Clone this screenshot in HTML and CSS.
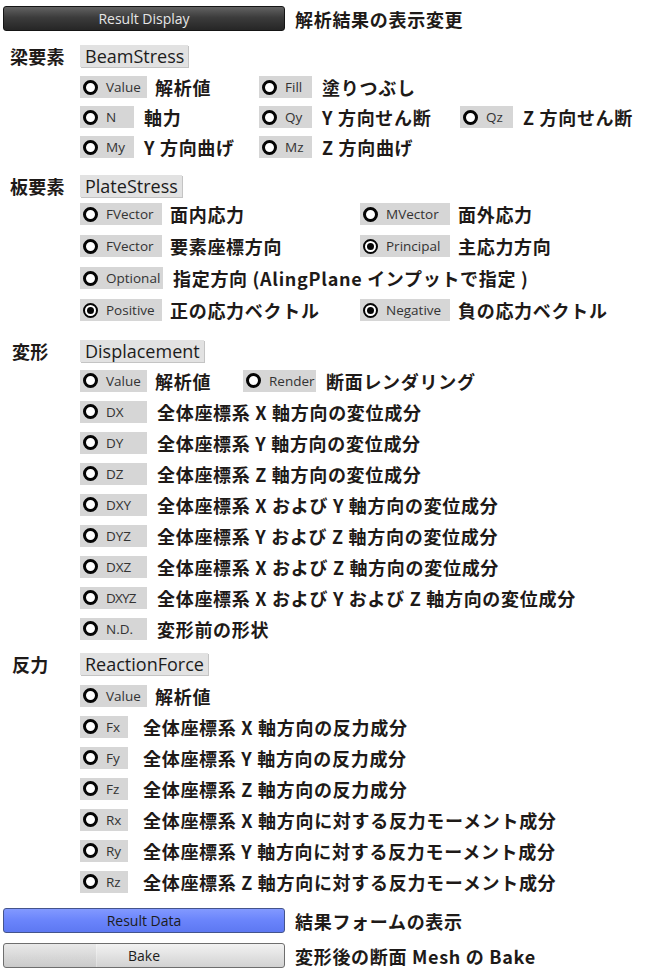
FILE: index.html
```html
<!DOCTYPE html>
<html lang="ja">
<head>
<meta charset="utf-8">
<title>Result Display</title>
<link rel="stylesheet" href="styles.css">
</head>
<body>
<div class="page">
  <div class="btnrow">
    <div class="btn btn-dark">Result Display</div>
    <span class="jp btn-label">解析結果の表示変更</span>
  </div>

  <div class="head head-beam"><span class="head-jp">梁要素</span><span class="tag">BeamStress</span></div>
  <div class="rows rows-beam">
    <div class="row">
      <div class="cell c179"><span class="opt w67"><i class="radio"></i>Value</span><span class="jp lab8">解析値</span></div>
      <div class="cell"><span class="opt w53"><i class="radio"></i>Fill</span><span class="jp">塗りつぶし</span></div>
    </div>
    <div class="row">
      <div class="cell c179"><span class="opt w54"><i class="radio"></i>N</span><span class="jp">軸力</span></div>
      <div class="cell c201"><span class="opt w53"><i class="radio"></i>Qy</span><span class="jp">Y 方向せん断</span></div>
      <div class="cell"><span class="opt w53"><i class="radio"></i>Qz</span><span class="jp">Z 方向せん断</span></div>
    </div>
    <div class="row">
      <div class="cell c179"><span class="opt w54"><i class="radio"></i>My</span><span class="jp">Y 方向曲げ</span></div>
      <div class="cell"><span class="opt w53"><i class="radio"></i>Mz</span><span class="jp">Z 方向曲げ</span></div>
    </div>
  </div>

  <div class="head head-plate"><span class="head-jp">板要素</span><span class="tag">PlateStress</span></div>
  <div class="rows rows-plate">
    <div class="row">
      <div class="cell c280"><span class="opt w82"><i class="radio"></i>FVector</span><span class="jp lab8">面内応力</span></div>
      <div class="cell"><span class="opt w90"><i class="radio"></i>MVector</span><span class="jp lab8">面外応力</span></div>
    </div>
    <div class="row">
      <div class="cell c280"><span class="opt w82"><i class="radio"></i>FVector</span><span class="jp lab8">要素座標方向</span></div>
      <div class="cell"><span class="opt w90"><i class="radio on"></i>Principal</span><span class="jp lab8">主応力方向</span></div>
    </div>
    <div class="row">
      <div class="cell"><span class="opt w83"><i class="radio"></i>Optional</span><span class="jp">指定方向 (AlingPlane インプットで指定 )</span></div>
    </div>
    <div class="row">
      <div class="cell c280"><span class="opt w82"><i class="radio on"></i>Positive</span><span class="jp lab8">正の応力ベクトル</span></div>
      <div class="cell"><span class="opt w90"><i class="radio on"></i>Negative</span><span class="jp lab8">負の応力ベクトル</span></div>
    </div>
  </div>

  <div class="head head-disp"><span class="head-jp indent">変形</span><span class="tag">Displacement</span></div>
  <div class="rows rows-disp">
    <div class="row">
      <div class="cell c163"><span class="opt w67"><i class="radio"></i>Value</span><span class="jp lab8">解析値</span></div>
      <div class="cell"><span class="opt w73"><i class="radio"></i>Render</span><span class="jp">断面レンダリング</span></div>
    </div>
    <div class="row"><span class="opt w67"><i class="radio"></i>DX</span><span class="jp lab10">全体座標系 X 軸方向の変位成分</span></div>
    <div class="row"><span class="opt w67"><i class="radio"></i>DY</span><span class="jp lab10">全体座標系 Y 軸方向の変位成分</span></div>
    <div class="row"><span class="opt w67"><i class="radio"></i>DZ</span><span class="jp lab10">全体座標系 Z 軸方向の変位成分</span></div>
    <div class="row"><span class="opt w67"><i class="radio"></i>DXY</span><span class="jp lab10">全体座標系 X および Y 軸方向の変位成分</span></div>
    <div class="row"><span class="opt w67"><i class="radio"></i>DYZ</span><span class="jp lab10">全体座標系 Y および Z 軸方向の変位成分</span></div>
    <div class="row"><span class="opt w67"><i class="radio"></i>DXZ</span><span class="jp lab10">全体座標系 X および Z 軸方向の変位成分</span></div>
    <div class="row"><span class="opt w67 tight"><i class="radio"></i>DXYZ</span><span class="jp lab10">全体座標系 X および Y および Z 軸方向の変位成分</span></div>
    <div class="row"><span class="opt w67"><i class="radio"></i>N.D.</span><span class="jp lab10">変形前の形状</span></div>
  </div>

  <div class="head head-react"><span class="head-jp indent">反力</span><span class="tag">ReactionForce</span></div>
  <div class="rows rows-react">
    <div class="row"><span class="opt w67"><i class="radio"></i>Value</span><span class="jp lab8">解析値</span></div>
    <div class="row"><span class="opt w48"><i class="radio"></i>Fx</span><span class="jp lab15">全体座標系 X 軸方向の反力成分</span></div>
    <div class="row"><span class="opt w48"><i class="radio"></i>Fy</span><span class="jp lab15">全体座標系 Y 軸方向の反力成分</span></div>
    <div class="row"><span class="opt w48"><i class="radio"></i>Fz</span><span class="jp lab15">全体座標系 Z 軸方向の反力成分</span></div>
    <div class="row"><span class="opt w48"><i class="radio"></i>Rx</span><span class="jp lab15">全体座標系 X 軸方向に対する反力モーメント成分</span></div>
    <div class="row"><span class="opt w48"><i class="radio"></i>Ry</span><span class="jp lab15">全体座標系 Y 軸方向に対する反力モーメント成分</span></div>
    <div class="row"><span class="opt w48"><i class="radio"></i>Rz</span><span class="jp lab15">全体座標系 Z 軸方向に対する反力モーメント成分</span></div>
  </div>

  <div class="btnrow btnrow-data">
    <div class="btn btn-blue">Result Data</div>
    <span class="jp btn-label">結果フォームの表示</span>
  </div>
  <div class="btnrow btnrow-bake">
    <div class="btn btn-light">Bake</div>
    <span class="jp btn-label">変形後の断面 Mesh の Bake</span>
  </div>
</div>
</body>
</html>
```

FILE: styles.css
```css
html, body {
  margin: 0;
  padding: 0;
  background: #ffffff;
}

body {
  font-family: "Noto Sans CJK JP", "Noto Sans", sans-serif;
  color: #1e1e1e;
}

.page {
  display: flex;
  flex-direction: column;
  padding-top: 6px;
}

/* ---------- buttons ---------- */
.btnrow {
  display: flex;
  align-items: center;
  height: 25px;
  padding-left: 3px;
}

.btnrow-data { margin-top: 11px; }
.btnrow-bake { margin-top: 10px; }

.btn {
  width: 282px;
  height: 25px;
  box-sizing: border-box;
  border-radius: 3px;
  display: flex;
  align-items: center;
  justify-content: center;
  font-family: "Open Sans", "Noto Sans", sans-serif;
  font-size: 14px;
}

.btn-dark {
  background: linear-gradient(#626262 0%, #3c3c3c 45%, #262626 100%);
  border: 1px solid #151515;
  color: #e6e6e6;
}

.btn-blue {
  background: linear-gradient(#8299ff 0%, #6a84fb 50%, #5d78f2 100%);
  border: 1px solid #44548c;
  color: #1c1c1c;
}

.btn-light {
  background:
    linear-gradient(90deg, rgba(0,0,0,0.04) 0, rgba(0,0,0,0.04) 92px, rgba(255,255,255,0.5) 92px, rgba(255,255,255,0) 93px),
    linear-gradient(#f2f2f2 0%, #e2e2e2 50%, #d2d2d2 100%);
  border: 1px solid #6e6e6e;
  color: #1c1c1c;
}

.btn-label {
  margin-left: 20px;
}

/* ---------- Japanese labels ---------- */
.jp {
  font-family: "Noto Sans CJK JP", sans-serif;
  font-weight: 700;
  font-size: 18px;
  letter-spacing: 0.7px;
  line-height: 1;
  color: #1e1a18;
  white-space: nowrap;
  margin-left: 10px;
}

.lab8 { margin-left: 8px; }
.lab10 { margin-left: 10px; }
.lab15 { margin-left: 15px; }

/* ---------- section headers ---------- */
.head {
  display: flex;
  align-items: center;
  height: 24px;
}

.head-beam { margin-top: 13px; }
.head-plate { margin-top: 12px; }
.head-disp { margin-top: 13px; }
.head-react { margin-top: 8px; }

.head-jp {
  width: 80px;
  box-sizing: border-box;
  padding-left: 10px;
  font-weight: 700;
  font-size: 18px;
  letter-spacing: 0.3px;
  line-height: 1;
  color: #1e1a18;
}

.head-jp.indent { padding-left: 12px; }

.tag {
  height: 22px;
  box-sizing: border-box;
  padding: 0 4px 0 5px;
  display: flex;
  align-items: center;
  background: #e2e2e2;
  box-shadow: 1px 1px 0 #c4c4c4;
  font-family: "Open Sans", "Noto Sans", sans-serif;
  font-size: 18px;
  color: #1c1c1c;
}

/* ---------- option rows ---------- */
.rows {
  display: flex;
  flex-direction: column;
  padding-left: 80px;
}

.rows-beam { margin-top: 4px; }
.rows-plate { margin-top: 0; }
.rows-disp { margin-top: 2px; }
.rows-react { margin-top: 4px; }

.row {
  display: flex;
  align-items: center;
  height: 31px;
}

.rows-beam .row { height: 30px; }
.rows-plate .row { height: 32px; }

.cell {
  display: flex;
  align-items: center;
}

.c163 { width: 163px; }
.c179 { width: 179px; }
.c201 { width: 201px; }
.c280 { width: 280px; }

.opt {
  display: flex;
  align-items: center;
  height: 22px;
  box-sizing: border-box;
  padding-left: 3px;
  background: #d6d6d6;
  font-family: "Open Sans", "Noto Sans", sans-serif;
  font-size: 13.5px;
  color: #333333;
  white-space: nowrap;
  flex-shrink: 0;
}

.opt.tight { letter-spacing: -0.8px; }

.w48 { width: 48px; }
.w53 { width: 53px; }
.w54 { width: 54px; }
.w67 { width: 67px; }
.w73 { width: 73px; }
.w82 { width: 82px; }
.w83 { width: 83px; }
.w90 { width: 90px; }

.radio {
  display: block;
  width: 15px;
  height: 15px;
  box-sizing: border-box;
  border: 3px solid #050505;
  border-radius: 50%;
  background: #ffffff;
  margin-right: 8px;
  position: relative;
  flex-shrink: 0;
}

.radio.on {
  border-width: 2px;
}

.radio.on::after {
  content: "";
  position: absolute;
  left: 50%;
  top: 50%;
  width: 7px;
  height: 7px;
  margin: -3.5px 0 0 -3.5px;
  border-radius: 50%;
  background: #050505;
}
```
